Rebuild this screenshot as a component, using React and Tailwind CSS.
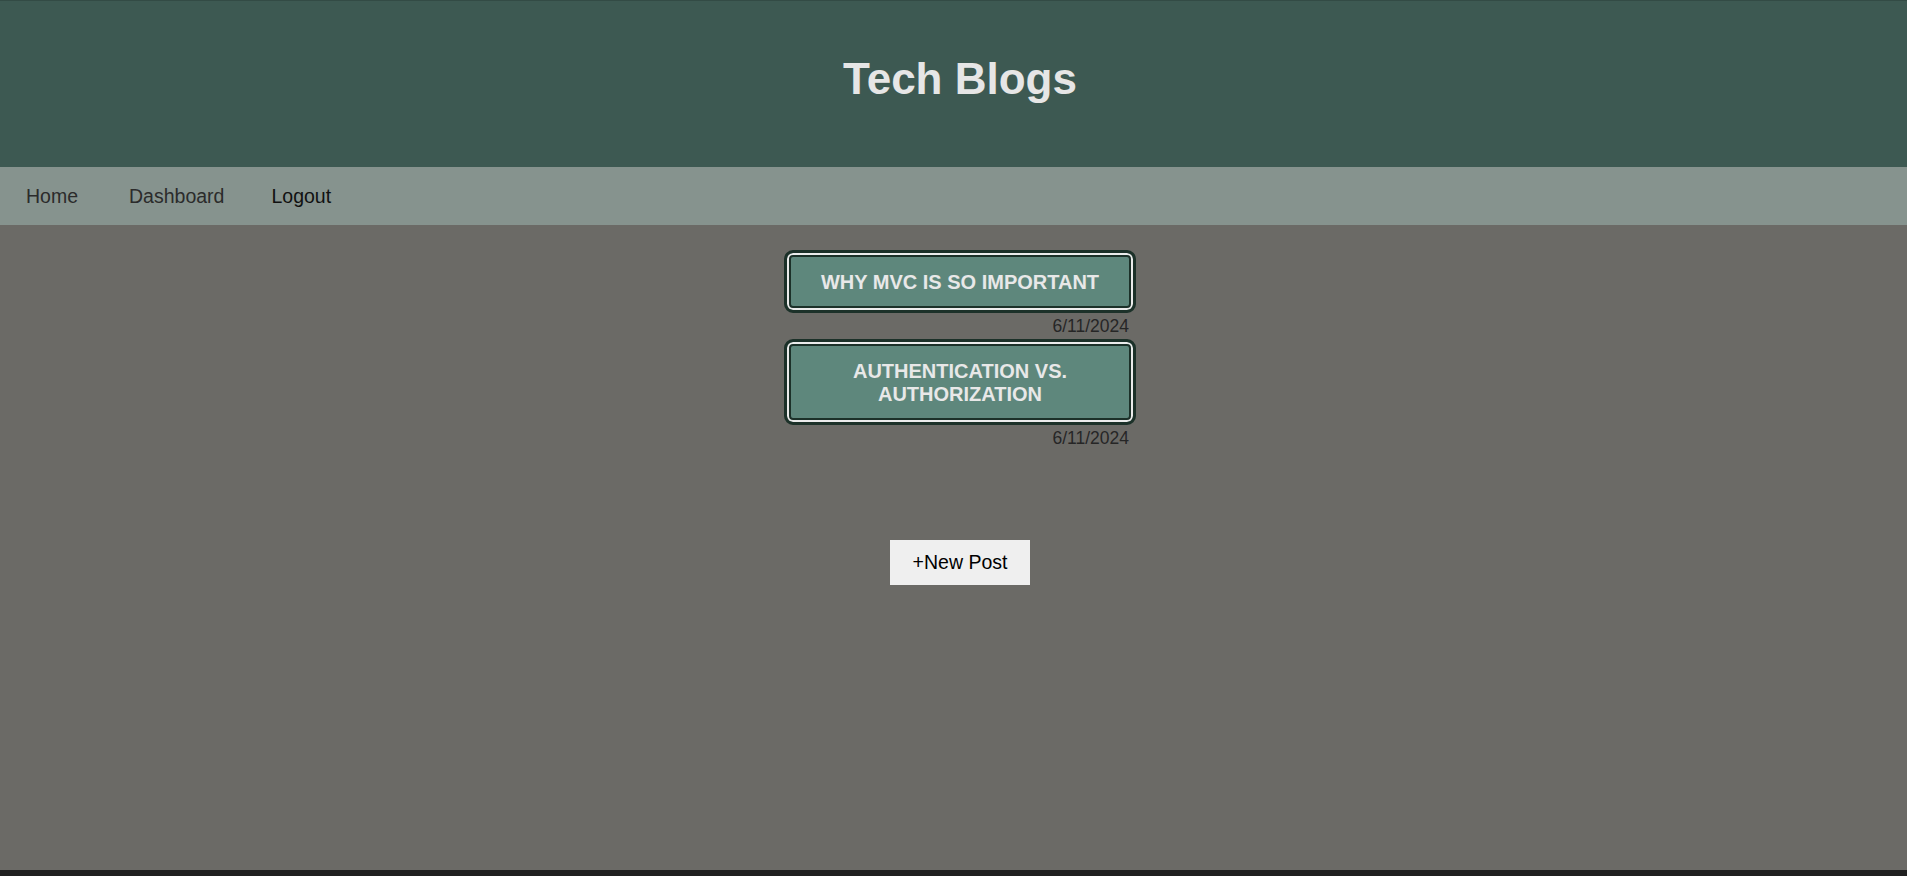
const posts = [
  { title: "WHY MVC IS SO IMPORTANT", date: "6/11/2024" },
  { title: "AUTHENTICATION VS. AUTHORIZATION", date: "6/11/2024" },
];

function PostCard({ title, date }) {
  return (
    <div className="flex w-[352px] flex-col">
      <a
        href="#"
        className="block rounded-[9px] border-[3px] border-[#1c3129] bg-[#5e877c] px-[20px] pb-[16px] pt-[18px] text-center text-[20px] font-bold leading-[23px] text-[#e8e8e8] shadow-[inset_0_0_0_2px_#ececec,inset_0_0_0_4px_#1c3129]"
      >
        {title}
      </a>
      <p className="pr-[7px] pt-[3px] text-right text-[17.5px] leading-[20px] text-[#262626]">{date}</p>
    </div>
  );
}

export default function App() {
  return (
    <div className="flex h-[876px] flex-col overflow-hidden font-['Liberation_Sans',Arial,sans-serif]">
      <header className="h-[167px] shrink-0 border-t border-[#334b45] bg-[#3d5952] pl-[13px] pt-[53px]">
        <h1 className="text-center text-[44px] font-bold leading-[49px] text-[#e6e6e6]">Tech Blogs</h1>
      </header>

      <nav className="flex h-[58px] shrink-0 items-center bg-[#86938e] pt-[2px] text-[19.5px]">
        <a href="#" className="ml-[26px] text-[#2b2b2b]">Home</a>
        <a href="#" className="ml-[51px] text-[#2b2b2b]">Dashboard</a>
        <button type="button" className="ml-[47px] text-[#111]">Logout</button>
      </nav>

      <main className="flex flex-1 flex-col items-center bg-[#6b6a66] pl-[13px] pt-[25px]">
        <div className="flex flex-col gap-[3px]">
          {posts.map((post) => (
            <PostCard key={post.title} {...post} />
          ))}
        </div>
        <button
          type="button"
          className="mt-[92px] h-[45px] w-[140px] bg-[#efefef] text-[19.5px] text-black"
        >
          +New Post
        </button>
      </main>

      <footer className="h-[6px] shrink-0 bg-[#202020]" />
    </div>
  );
}
